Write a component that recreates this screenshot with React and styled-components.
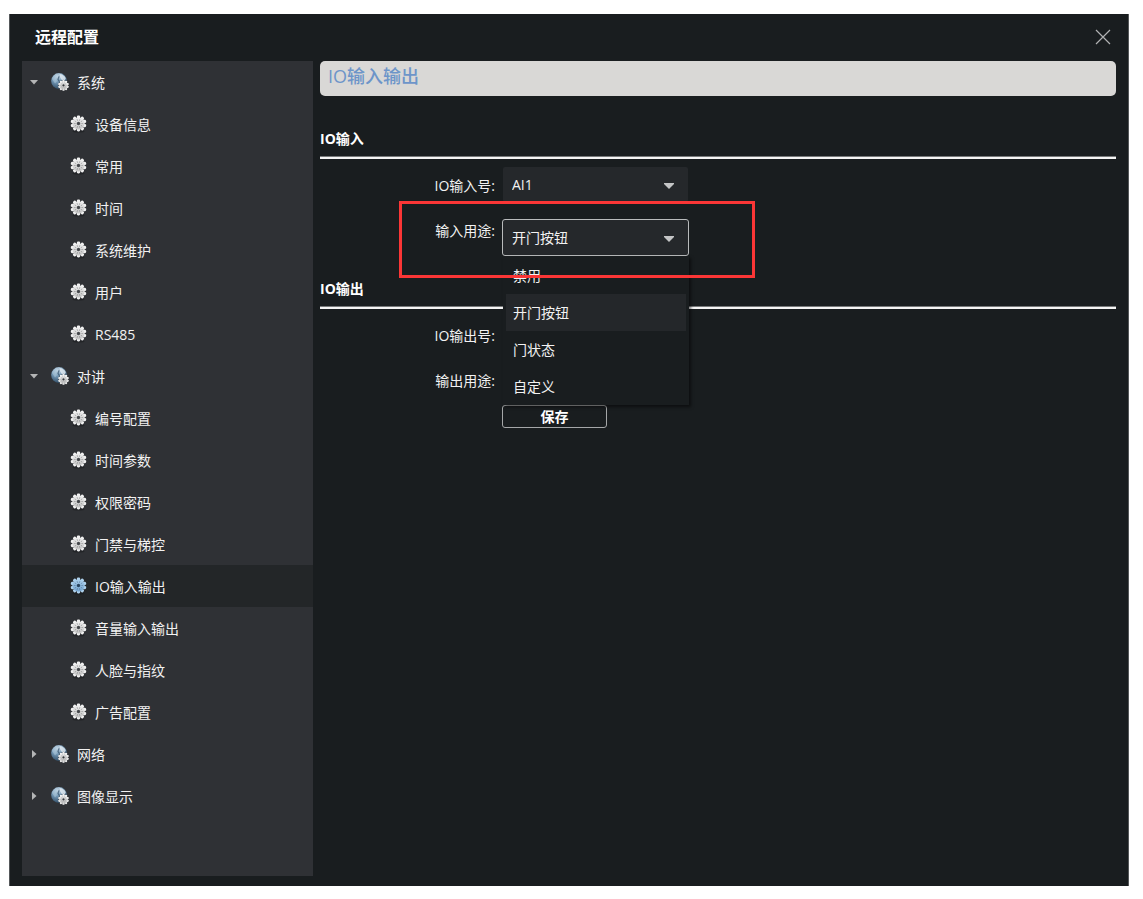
import React, { useState } from "react";
import styled, { createGlobalStyle, css } from "styled-components";

const GlobalStyle = createGlobalStyle`
  *, *::before, *::after { box-sizing: border-box; }
  body {
    margin: 0;
    background: #ffffff;
    color: #f2f2f2;
    font-family: "Open Sans", "Noto Sans CJK SC", sans-serif;
    font-size: 14px;
  }
  button, select { font: inherit; color: inherit; }
  ul { list-style: none; margin: 0; padding: 0; }
`;

const Page = styled.div`
  display: flex;
  min-height: 100vh;
  padding: 14px 14px 13px 9px;
`;

const Dialog = styled.section`
  flex: 1;
  display: flex;
  flex-direction: column;
  background: #191d1f;
  border: solid #55585a;
  border-width: 0 1px;
`;

const TitleBar = styled.header`
  display: flex;
  align-items: center;
  justify-content: space-between;
  height: 47px;
  padding: 0 17px 2px 25px;
`;

const DialogTitle = styled.h1`
  margin: 0;
  font-size: 16px;
  font-weight: 700;
  line-height: 24px;
  color: #ffffff;
`;

const CloseButton = styled.button`
  display: flex;
  padding: 0;
  border: 0;
  background: none;
  cursor: pointer;
`;

const Body = styled.div`
  flex: 1;
  display: flex;
  gap: 7px;
  padding: 0 12px 10px 12px;
`;

const Sidebar = styled.nav`
  flex: 0 0 291px;
  background: #2f3135;
`;

const rowStyles = css`
  display: flex;
  align-items: center;
  width: 100%;
  height: 42px;
  gap: 8px;
  line-height: 20px;
  color: #f2f2f2;
`;

const GroupButton = styled.button`
  ${rowStyles}
  padding: 0 7px;
  border: 0;
  background: none;
  text-align: left;
  cursor: pointer;
`;

const ItemLink = styled.a`
  ${rowStyles}
  padding: 0 8px 0 48px;
  background: ${(p) => (p.$active ? "#232628" : "transparent")};
  text-decoration: none;
`;

const Arrow = styled.svg`
  flex: none;
  margin-right: 4px;
`;

const ItemLabel = styled.span`
  padding-top: 2px;
`;

const Content = styled.main`
  flex: 1;
  min-width: 0;
`;

const Banner = styled.h2`
  margin: 0;
  height: 35px;
  padding: 0 8px;
  border-radius: 5px;
  background: #d9d8d6;
  color: #6d95c9;
  font-size: 18px;
  font-weight: 500;
  line-height: 30px;
`;

const Section = styled.section`
  margin-top: ${(p) => (p.$first ? 30 : 23)}px;
`;

const SectionTitle = styled.h3`
  margin: 0 0 4px;
  height: 33px;
  border-bottom: 2px solid #f4f4f4;
  box-shadow: inset 0 -1px 0 #77797a;
  font-size: 14px;
  font-weight: 700;
  line-height: 26px;
  color: #ffffff;
`;

const FormRow = styled.div`
  position: relative;
  display: flex;
  align-items: flex-start;
  gap: 7px;
  height: 45px;
`;

const FieldLabel = styled.label`
  width: 175px;
  text-align: right;
  line-height: 46px;
`;

const Field = styled.div`
  position: relative;
  width: 187px;
  margin-top: ${(p) => (p.$open ? 11 : 3)}px;
`;

const Select = styled.select`
  display: block;
  width: 100%;
  height: 37px;
  padding: 0 32px 0 9px;
  appearance: none;
  outline: none;
  border: 1px solid ${(p) => (p.$open ? "#b9bbbc" : "transparent")};
  border-radius: 3px;
  background: #25282b;
  background-clip: padding-box;
`;

const SelectArrow = styled.svg`
  position: absolute;
  top: 16px;
  right: 14px;
  pointer-events: none;
`;

const Menu = styled.ul`
  position: absolute;
  z-index: 2;
  top: 37px;
  left: 1px;
  right: 0;
  padding: 1px 3px 0;
  background: #191d1f;
  box-shadow: 2px 2px 3px rgba(0, 0, 0, 0.5);
`;

const MenuOption = styled.li`
  padding: 0 7px;
  line-height: 37px;
  background: ${(p) => (p["aria-selected"] ? "#24272a" : "transparent")};
  cursor: pointer;
`;

const Highlight = styled.div`
  position: absolute;
  z-index: 3;
  top: -7px;
  left: 79px;
  width: 356px;
  height: 77px;
  border: 3px solid #fb3636;
  pointer-events: none;
`;

const SaveButton = styled.button`
  display: block;
  width: 105px;
  height: 23px;
  margin: 2px 0 0 182px;
  padding: 0;
  border: 1px solid #a5a7a8;
  border-radius: 3px;
  background: #191d1f;
  color: #ffffff;
  font-weight: 700;
  line-height: 20px;
  cursor: pointer;
`;

const TEETH = [0, 36, 72, 108, 144, 180, 216, 252, 288, 324];

function Defs() {
  return (
    <svg width="0" height="0" style={{ display: "block" }} aria-hidden="true">
      <defs>
        <linearGradient id="gearLight" gradientUnits="userSpaceOnUse" x1="0" y1="-8" x2="0" y2="8">
          <stop offset="0" stopColor="#f6f6f6" />
          <stop offset="1" stopColor="#bdbdbd" />
        </linearGradient>
        <linearGradient id="gearBlue" gradientUnits="userSpaceOnUse" x1="0" y1="-8" x2="0" y2="8">
          <stop offset="0" stopColor="#b3d6f0" />
          <stop offset="1" stopColor="#6a9cca" />
        </linearGradient>
        <radialGradient id="globe" cx="0.4" cy="0.2" r="0.85">
          <stop offset="0" stopColor="#c4d6e4" />
          <stop offset="0.45" stopColor="#7397b4" />
          <stop offset="1" stopColor="#2c4862" />
        </radialGradient>
      </defs>
    </svg>
  );
}

function Gear({ fill, hole }) {
  return (
    <g>
      {TEETH.map((a) => (
        <rect key={a} x="-1.7" y="-8" width="3.4" height="4.5" rx="1.4" transform={`rotate(${a})`} fill={fill} />
      ))}
      <circle r="6" fill={fill} />
      {TEETH.map((a) => (
        <path key={a} d="M0-2.8V-4.6" stroke={hole} strokeOpacity="0.4" strokeWidth="0.8" transform={`rotate(${a + 18})`} />
      ))}
      <circle r="1.7" fill={hole} />
    </g>
  );
}

function GearIcon({ active }) {
  return (
    <svg width="17" height="18" viewBox="-8.5 -8.5 17 18" aria-hidden="true">
      <ellipse cx="0" cy="8" rx="6" ry="1.1" fill="#15171a" fillOpacity="0.5" />
      <Gear fill={active ? "url(#gearBlue)" : "url(#gearLight)"} hole={active ? "#26425c" : "#44474b"} />
    </svg>
  );
}

function GlobeGearIcon() {
  return (
    <svg width="18" height="18" viewBox="0 0 18 18" aria-hidden="true">
      <circle cx="8" cy="8" r="7.9" fill="url(#globe)" />
      <path d="M8.4 1C11 .9 13.6 2.6 14.8 5.2L13.6 7.6 11 7.2 9.4 5Z" fill="#e6eef4" fillOpacity="0.8" />
      <path d="M1 6C1.6 3.6 3.4 1.8 5.6 1L7.2 2.6 5.4 5.2 5.8 8.6 4 10.4Z" fill="#b4cde0" fillOpacity="0.5" />
      <path d="M8 3.4 7 6.4 9 9.4" fill="none" stroke="#284761" strokeOpacity="0.65" strokeWidth="1.2" />
      <circle cx="12.5" cy="12.4" r="5.6" fill="#23272c" fillOpacity="0.45" />
      <g transform="translate(12.5 12.4) scale(.68)">
        <Gear fill="url(#gearLight)" hole="#33373b" />
      </g>
    </svg>
  );
}

function TreeArrow({ open }) {
  return (
    <Arrow width="10" height="10" viewBox="0 0 10 10" aria-hidden="true">
      <path d={open ? "M1 3H9L5 7.5Z" : "M3 1L7.5 5L3 9Z"} fill="#b4b5b6" />
    </Arrow>
  );
}

const GROUPS = [
  { name: "系统", items: ["设备信息", "常用", "时间", "系统维护", "用户", "RS485"] },
  {
    name: "对讲",
    items: ["编号配置", "时间参数", "权限密码", "门禁与梯控", "IO输入输出", "音量输入输出", "人脸与指纹", "广告配置"],
  },
  { name: "网络", items: [] },
  { name: "图像显示", items: [] },
];

const PURPOSES = ["禁用", "开门按钮", "门状态", "自定义"];

function TreeGroup({ group, current, onSelect }) {
  const [open, setOpen] = useState(group.items.length > 0);
  return (
    <li>
      <GroupButton type="button" aria-expanded={open} onClick={() => setOpen(!open)}>
        <TreeArrow open={open} />
        <GlobeGearIcon />
        <ItemLabel>{group.name}</ItemLabel>
      </GroupButton>
      {open && (
        <ul>
          {group.items.map((item) => (
            <li key={item}>
              <ItemLink
                href="#"
                $active={item === current}
                aria-current={item === current ? "page" : undefined}
                onClick={(e) => {
                  e.preventDefault();
                  onSelect(item);
                }}
              >
                <GearIcon active={item === current} />
                <ItemLabel>{item}</ItemLabel>
              </ItemLink>
            </li>
          ))}
        </ul>
      )}
    </li>
  );
}

function SelectRow({ id, label, open, highlighted, children, menu, ...rest }) {
  return (
    <FormRow>
      <FieldLabel htmlFor={id}>{label}</FieldLabel>
      <Field $open={open}>
        <Select id={id} $open={open} {...rest}>
          {children}
        </Select>
        <SelectArrow width="12" height="8" viewBox="0 0 12 8" aria-hidden="true">
          <path d="M1 1H11V2L6 7L1 2Z" fill="#c4c5c6" />
        </SelectArrow>
        {menu}
      </Field>
      {highlighted && <Highlight />}
    </FormRow>
  );
}

export default function App() {
  const [current, setCurrent] = useState("IO输入输出");
  const [purpose, setPurpose] = useState("开门按钮");

  return (
    <Page>
      <GlobalStyle />
      <Defs />
      <Dialog>
        <TitleBar>
          <DialogTitle>远程配置</DialogTitle>
          <CloseButton type="button" aria-label="关闭">
            <svg width="16" height="16" viewBox="0 0 16 16" aria-hidden="true">
              <path d="M1 1L15 15M15 1L1 15" stroke="#b0b2b3" strokeWidth="1.2" />
            </svg>
          </CloseButton>
        </TitleBar>
        <Body>
          <Sidebar>
            <ul>
              {GROUPS.map((g) => (
                <TreeGroup key={g.name} group={g} current={current} onSelect={setCurrent} />
              ))}
            </ul>
          </Sidebar>
          <Content>
            <Banner>IO输入输出</Banner>
            <Section $first>
              <SectionTitle>IO输入</SectionTitle>
              <SelectRow id="input-number" label="IO输入号:">
                <option>AI1</option>
              </SelectRow>
              <SelectRow
                id="input-purpose"
                label="输入用途:"
                open
                highlighted
                value={purpose}
                onChange={(e) => setPurpose(e.target.value)}
                menu={
                  <Menu role="listbox" aria-label="输入用途">
                    {PURPOSES.map((p) => (
                      <MenuOption key={p} role="option" aria-selected={p === purpose} onClick={() => setPurpose(p)}>
                        {p}
                      </MenuOption>
                    ))}
                  </Menu>
                }
              >
                {PURPOSES.map((p) => (
                  <option key={p}>{p}</option>
                ))}
              </SelectRow>
            </Section>
            <Section>
              <SectionTitle>IO输出</SectionTitle>
              <SelectRow id="output-number" label="IO输出号:" />
              <SelectRow id="output-purpose" label="输出用途:" />
              <SaveButton type="button">保存</SaveButton>
            </Section>
          </Content>
        </Body>
      </Dialog>
    </Page>
  );
}
